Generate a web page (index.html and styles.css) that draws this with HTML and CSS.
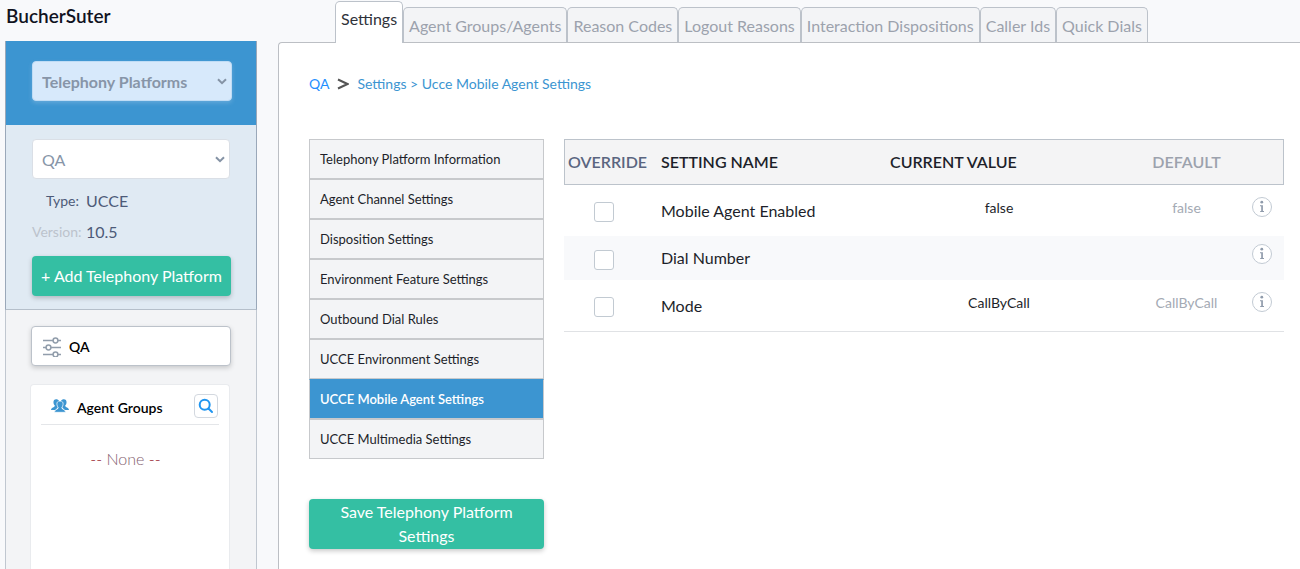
FILE: index.html
```html
<!DOCTYPE html>
<html lang="en">
<head>
<meta charset="utf-8">
<title>BucherSuter - Settings</title>
<link rel="stylesheet" href="styles.css">
</head>
<body>
<div class="app">
  <aside class="side">
    <h1 class="brand">BucherSuter</h1>
    <div class="panel">
      <div class="category">
        <div class="select-wrap">
          <select class="select select-category" aria-label="Category"><option>Telephony Platforms</option></select>
          <svg class="chevron" viewBox="0 0 10 7" aria-hidden="true"><path d="M1 1.2 5 5.2 9 1.2"/></svg>
        </div>
      </div>
      <div class="platform">
        <div class="select-wrap">
          <select class="select" aria-label="Platform"><option>QA</option></select>
          <svg class="chevron" viewBox="0 0 10 7" aria-hidden="true"><path d="M1 1.2 5 5.2 9 1.2"/></svg>
        </div>
        <dl class="facts">
          <dt>Type:</dt><dd>UCCE</dd>
          <dt class="faint">Version:</dt><dd>10.5</dd>
        </dl>
        <button class="btn btn-add" type="button">+ Add Telephony Platform</button>
      </div>
      <div class="groups-area">
        <button class="current" type="button">
          <svg class="sliders" viewBox="0 0 18 20" aria-hidden="true"><path d="M0 3.5H10M15 3.5H18M0 10.5H3M8 10.5H18M0 17.5H10M15 17.5H18"/><circle cx="12.5" cy="3.5" r="2.4"/><circle cx="5.5" cy="10.5" r="2.4"/><circle cx="12.5" cy="17.5" r="2.4"/></svg>
          QA
        </button>
        <section class="groups">
          <header class="groups-head">
            <svg class="people" viewBox="0 0 18 14" aria-hidden="true"><path d="M6.500.5C3.500-.3 2.200 1.500 2.500 3.800 2.600 5.200 3.200 6 3.800 6.600 4 8.600 0 8.300 0 11H4.500L8 7V1.500ZM11.500.5C14.500-.3 15.800 1.500 15.500 3.800 15.400 5.200 14.800 6 14.200 6.600 14 8.600 18 8.300 18 11H13.500L10 7V1.500Z"/><path class="front" d="M9 2C11.200 2 12.300 3.300 12.100 5.200 12 6.700 11.500 7.700 10.800 8.400 10.600 10.700 14.600 10 14.600 13.300H3.400C3.400 10 7.400 10.700 7.200 8.400 6.500 7.700 6 6.700 5.900 5.200 5.700 3.300 6.800 2 9 2Z"/></svg>
            <h2>Agent Groups</h2>
            <button class="search" type="button" aria-label="Search agent groups"><svg viewBox="0 0 16 16" aria-hidden="true"><circle cx="6.700" cy="6.700" r="5"/><path d="M10.500 10.500 14 14"/></svg></button>
          </header>
          <p class="none"><span>--</span> None <span>--</span></p>
        </section>
      </div>
    </div>
  </aside>

  <main class="main">
    <nav class="tabs">
      <a class="tab active" href="#">Settings</a>
      <a class="tab" href="#">Agent Groups/Agents</a>
      <a class="tab" href="#">Reason Codes</a>
      <a class="tab" href="#">Logout Reasons</a>
      <a class="tab" href="#">Interaction Dispositions</a>
      <a class="tab" href="#">Caller Ids</a>
      <a class="tab" href="#">Quick Dials</a>
    </nav>
    <div class="content">
      <nav class="crumbs">
        <a class="crumb-root" href="#">QA</a>
        <svg class="crumb-sep" viewBox="0 0 12 12" aria-hidden="true"><path d="M1 1.500 10.500 6 1 10.500"/></svg>
        <a href="#">Settings &gt; Ucce Mobile Agent Settings</a>
      </nav>
      <div class="columns">
        <div class="menu-col">
          <nav class="menu">
            <a href="#">Telephony Platform Information</a>
            <a href="#">Agent Channel Settings</a>
            <a href="#">Disposition Settings</a>
            <a href="#">Environment Feature Settings</a>
            <a href="#">Outbound Dial Rules</a>
            <a href="#">UCCE Environment Settings</a>
            <a class="selected" href="#">UCCE Mobile Agent Settings</a>
            <a href="#">UCCE Multimedia Settings</a>
          </nav>
          <button class="btn btn-save" type="button">Save Telephony Platform Settings</button>
        </div>
        <table class="settings">
          <colgroup><col class="c-override"><col><col class="c-value"><col class="c-default"><col class="c-info"></colgroup>
          <thead>
            <tr><th class="h-override">Override</th><th>Setting Name</th><th class="h-value">Current Value</th><th class="h-default">Default</th><th></th></tr>
          </thead>
          <tbody>
            <tr>
              <td class="check"><input type="checkbox" aria-label="Override Mobile Agent Enabled"></td>
              <td>Mobile Agent Enabled</td><td class="value">false</td><td class="value default">false</td>
              <td class="info"><button type="button" aria-label="About Mobile Agent Enabled"><svg viewBox="0 0 20 20" aria-hidden="true"><circle class="ring" cx="10" cy="10" r="9.500"/><circle cx="9.800" cy="5.200" r="1.400"/><path d="M8 8.200H10.900V14H12V15H8.200V14H9.200V9.300H8Z"/></svg></button></td>
            </tr>
            <tr>
              <td class="check"><input type="checkbox" aria-label="Override Dial Number"></td>
              <td>Dial Number</td><td class="value"></td><td class="value default"></td>
              <td class="info"><button type="button" aria-label="About Dial Number"><svg viewBox="0 0 20 20" aria-hidden="true"><circle class="ring" cx="10" cy="10" r="9.500"/><circle cx="9.800" cy="5.200" r="1.400"/><path d="M8 8.200H10.900V14H12V15H8.200V14H9.200V9.300H8Z"/></svg></button></td>
            </tr>
            <tr>
              <td class="check"><input type="checkbox" aria-label="Override Mode"></td>
              <td>Mode</td><td class="value">CallByCall</td><td class="value default">CallByCall</td>
              <td class="info"><button type="button" aria-label="About Mode"><svg viewBox="0 0 20 20" aria-hidden="true"><circle class="ring" cx="10" cy="10" r="9.500"/><circle cx="9.800" cy="5.200" r="1.400"/><path d="M8 8.200H10.900V14H12V15H8.200V14H9.200V9.300H8Z"/></svg></button></td>
            </tr>
          </tbody>
        </table>
      </div>
    </div>
  </main>
</div>
</body>
</html>
```

FILE: styles.css
```css
* { box-sizing: border-box; }
body { margin: 0; background: #f8f9fb; color: #1d1f2a; font: 16px/24px Lato, sans-serif; }
a { color: inherit; text-decoration: none; }
button, input, select { font: inherit; margin: 0; }
h1, h2, p, dl, dd { margin: 0; }

.app { display: flex; gap: 21px; min-height: 100vh; padding-left: 5px; }

/* Sidebar */
.side { flex: none; width: 252px; display: flex; flex-direction: column; }
.brand { padding: 4px 1px 13px; font-size: 19px; line-height: 24px; font-weight: 600; color: #10131f; }
.panel { flex: 1; display: flex; flex-direction: column; }
.category { padding: 20px 24px 24px 26px; border: 1px solid #9aa8b9; border-width: 0 1px; background: #3c95d1; }
.platform { padding: 14px 25px 13px 26px; border: 1px solid #9aa8b9; border-width: 0 1px 1px; border-bottom-color: #b5bfca; background: #e0eaf3; }
.select-wrap { position: relative; }
.platform .select-wrap { margin-right: 1px; }
.select { display: block; width: 100%; height: 40px; padding: 2px 24px 0 9px; border: 1px solid #dadfe6; border-radius: 4px; background: #fff; color: #8795a8; appearance: none; }
.select-category { background: #d7e9fb; border-color: #bfdcf5; font-weight: 700; box-shadow: 0 2px 4px rgba(190, 215, 240, .3); }
.chevron { position: absolute; right: 5px; top: 17px; width: 10px; height: 7px; fill: none; stroke: #8593a5; stroke-width: 2; pointer-events: none; }
.facts { display: grid; grid-template-columns: 47px 1fr; column-gap: 7px; padding: 6px 0 9px; line-height: 31px; color: #4d5a78; }
.facts dt { font-size: 14px; text-align: right; white-space: nowrap; }
.facts .faint { color: #bcc3cc; }

.btn { display: block; width: 100%; border: 0; border-radius: 4px; background: #34bfa3; color: #fff; box-shadow: 0 2px 5px rgba(0, 0, 0, .22); }
.btn-add { height: 40px; padding: 0; white-space: nowrap; }

.groups-area { flex: 1; display: flex; flex-direction: column; gap: 18px; padding: 16px 25px 0; border: 1px solid #c0c7d0; border-width: 0 1px; background: #f3f4f6; }
.current { display: flex; align-items: center; gap: 8px; height: 40px; padding: 1px 11px 0; border: 1px solid #bcc2ca; border-radius: 4px; background: #fff; box-shadow: 0 2px 5px rgba(0, 0, 0, .18); color: #000; font-size: 14px; font-weight: 600; }
.sliders { width: 18px; height: 20px; fill: none; stroke: #919dab; stroke-width: 1.500; }
.groups { flex: 1; margin: 0 1px 0 -1px; padding: 9px 10px 0; border: 1px solid #e9ebee; border-width: 1px 1px 0; border-radius: 4px 4px 0 0; background: #fff; }
.groups-head { display: flex; align-items: center; padding: 0 1px 6px 10px; border-bottom: 1px solid #e4e6e9; }
.groups-head h2 { flex: 1; padding: 4px 0 0 8px; font-size: 14px; line-height: 20px; font-weight: 600; color: #000; }
.people { width: 18px; height: 14px; fill: #3c95d1; }
.people .front { stroke: #fff; stroke-width: .7; }
.search { display: flex; width: 24px; height: 24px; padding: 3px; border: 1px solid #d3d8df; border-radius: 4px; background: #fff; }
.search svg { width: 16px; height: 16px; fill: none; stroke: #1f95f0; stroke-width: 2; stroke-linecap: round; }
.none { padding: 22px 18px 0 9px; text-align: center; font-weight: 300; color: #83606f; }
.none span { color: #8c0010; }

/* Main */
.main { flex: 1; min-width: 0; display: flex; flex-direction: column; }
.tabs { display: flex; align-items: flex-end; padding: 1px 0 0 57px; color: #9ca2ad; white-space: nowrap; }
.tab { height: 35px; padding: 6px 5px 0; border: 1px solid #bcc2ca; border-bottom: 0; border-radius: 5px 5px 0 0; background: #f3f4f6; line-height: 24px; }
.tab.active { z-index: 1; height: 42px; margin-bottom: -1px; padding-top: 5px; background: #fff; color: #2f323a; }
.content { flex: 1; padding: 29px 16px 20px 30px; border: 1px solid #bcbfc4; border-width: 1px 0 0 1px; border-radius: 4px 0 0 0; background: #fff; }
.crumbs { display: flex; align-items: center; gap: 8px; height: 24px; font-size: 14px; color: #3c95d1; }
.crumb-root { color: #1f8fff; }
.crumb-sep { width: 12px; height: 12px; fill: none; stroke: #555; stroke-width: 2; }
.columns { display: flex; align-items: flex-start; gap: 20px; padding-top: 43px; }
.menu-col { flex: none; width: 235px; }
.menu { margin-bottom: 40px; font-size: 13px; }
.menu a { display: block; height: 40px; padding: 7px 10px; border: 1px solid #c7c9cc; background: #f3f4f6; }
.menu .selected { border-top-color: #3c95d1; background: #3c95d1; color: #fff; font-weight: 600; }
.btn-save { padding: 1px 20px; }

.settings { flex: 1; min-width: 0; border-collapse: separate; border-spacing: 0; table-layout: fixed; }
.c-override { width: 88px; }
.c-value { width: 244px; }
.c-default { width: 131px; }
.c-info { width: 32px; }
th, td { padding: 0 0 0 9px; text-align: left; }
th { height: 46px; border: 1px solid #bcc3cb; border-width: 1px 0; background: #f4f4f5; font-weight: 600; text-transform: uppercase; white-space: nowrap; }
th:first-child { border-left-width: 1px; }
th:last-child { border-right-width: 1px; }
.settings .h-override { padding-left: 3px; color: #5a6580; }
.settings .h-value { padding-left: 13px; }
.settings .h-default { padding: 0; text-align: center; color: #9ca2ad; }
td { height: 51px; }
tr:nth-child(2) td { height: 44px; background: #f8f9fb; }
tr:nth-child(3) td { height: 52px; border-bottom: 1px solid #e0e2e5; }
.settings .check { padding: 3px 0 0 30px; }
.check input { display: block; width: 20px; height: 20px; border: 1px solid #c2cad2; border-radius: 3px; background: #fff; appearance: none; }
.settings .value { padding: 0 0 5px; text-align: center; font-size: 14px; }
.settings .default { color: #a4aab4; }
.settings .info { padding: 0 0 8px; }
.info button { display: block; width: 20px; height: 20px; padding: 0; border: 0; background: none; }
.info svg { display: block; width: 20px; height: 20px; fill: #8f9bab; }
.info .ring { fill: #fff; stroke: #c2cad3; }
```
